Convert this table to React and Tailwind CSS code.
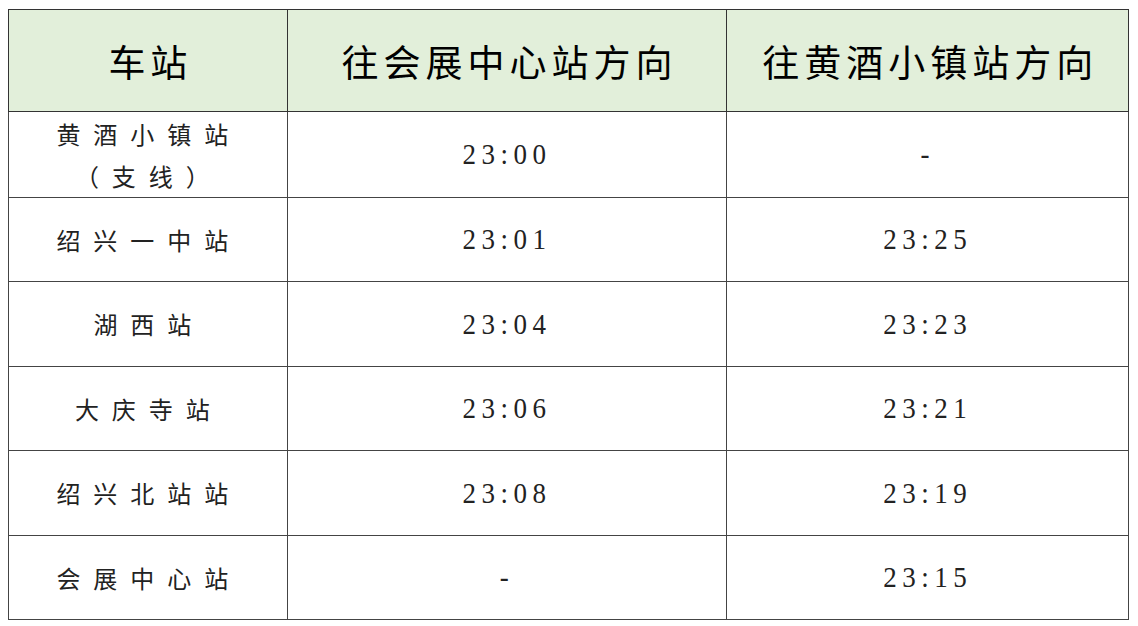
export default function App() {
  const rows = [
    { name: ["黄酒小镇站", "（支线）"], a: "23:00", b: "-", h: "h-[86px]" },
    { name: ["绍兴一中站"], a: "23:01", b: "23:25", h: "h-[84px]" },
    { name: ["湖西站"], a: "23:04", b: "23:23", h: "h-[85px]" },
    { name: ["大庆寺站"], a: "23:06", b: "23:21", h: "h-[84px]" },
    { name: ["绍兴北站站"], a: "23:08", b: "23:19", h: "h-[85px]" },
    { name: ["会展中心站"], a: "-", b: "23:15", h: "h-[84px]" },
  ];
  const cjk = { fontFamily: '"Noto Sans CJK SC", sans-serif' };
  const num = { fontFamily: '"Liberation Serif", "Noto Sans CJK SC", serif' };
  return (
    <div className="w-[1138px] h-[626px] bg-white pt-[9px] pl-[8px]">
      <table className="w-[1121px] border-collapse border border-[#555] text-[#222]" style={cjk}>
        <colgroup>
          <col className="w-[279px]" />
          <col className="w-[440px]" />
          <col className="w-[402px]" />
        </colgroup>
        <thead>
          <tr className="h-[102px] bg-[#e2efda] text-black">
            <th className="border border-[#333] text-[37px] font-normal tracking-[5px] pl-[5px] pt-[2px]">车站</th>
            <th className="border border-[#333] text-[37px] font-normal tracking-[5px] pl-[5px] pt-[2px]">往会展中心站方向</th>
            <th className="border border-[#333] text-[37px] font-normal tracking-[5px] pl-[5px] pt-[2px]">往黄酒小镇站方向</th>
          </tr>
        </thead>
        <tbody>
          {rows.map((r, i) => (
            <tr key={i} className={r.h}>
              <td className="border border-[#444] text-center text-[24px] leading-[42px] tracking-[13px] pl-[2px]">
                {r.name.map((n, j) => (
                  <div key={j}>{n}</div>
                ))}
              </td>
              <td className="border border-[#444] text-center text-[27px] tracking-[5.5px]" style={num}>
                <span className="inline-block scale-y-[1.12]">{r.a}</span>
              </td>
              <td className="border border-[#444] text-center text-[27px] tracking-[5.5px]" style={num}>
                <span className="inline-block scale-y-[1.12]">{r.b}</span>
              </td>
            </tr>
          ))}
        </tbody>
      </table>
    </div>
  );
}
